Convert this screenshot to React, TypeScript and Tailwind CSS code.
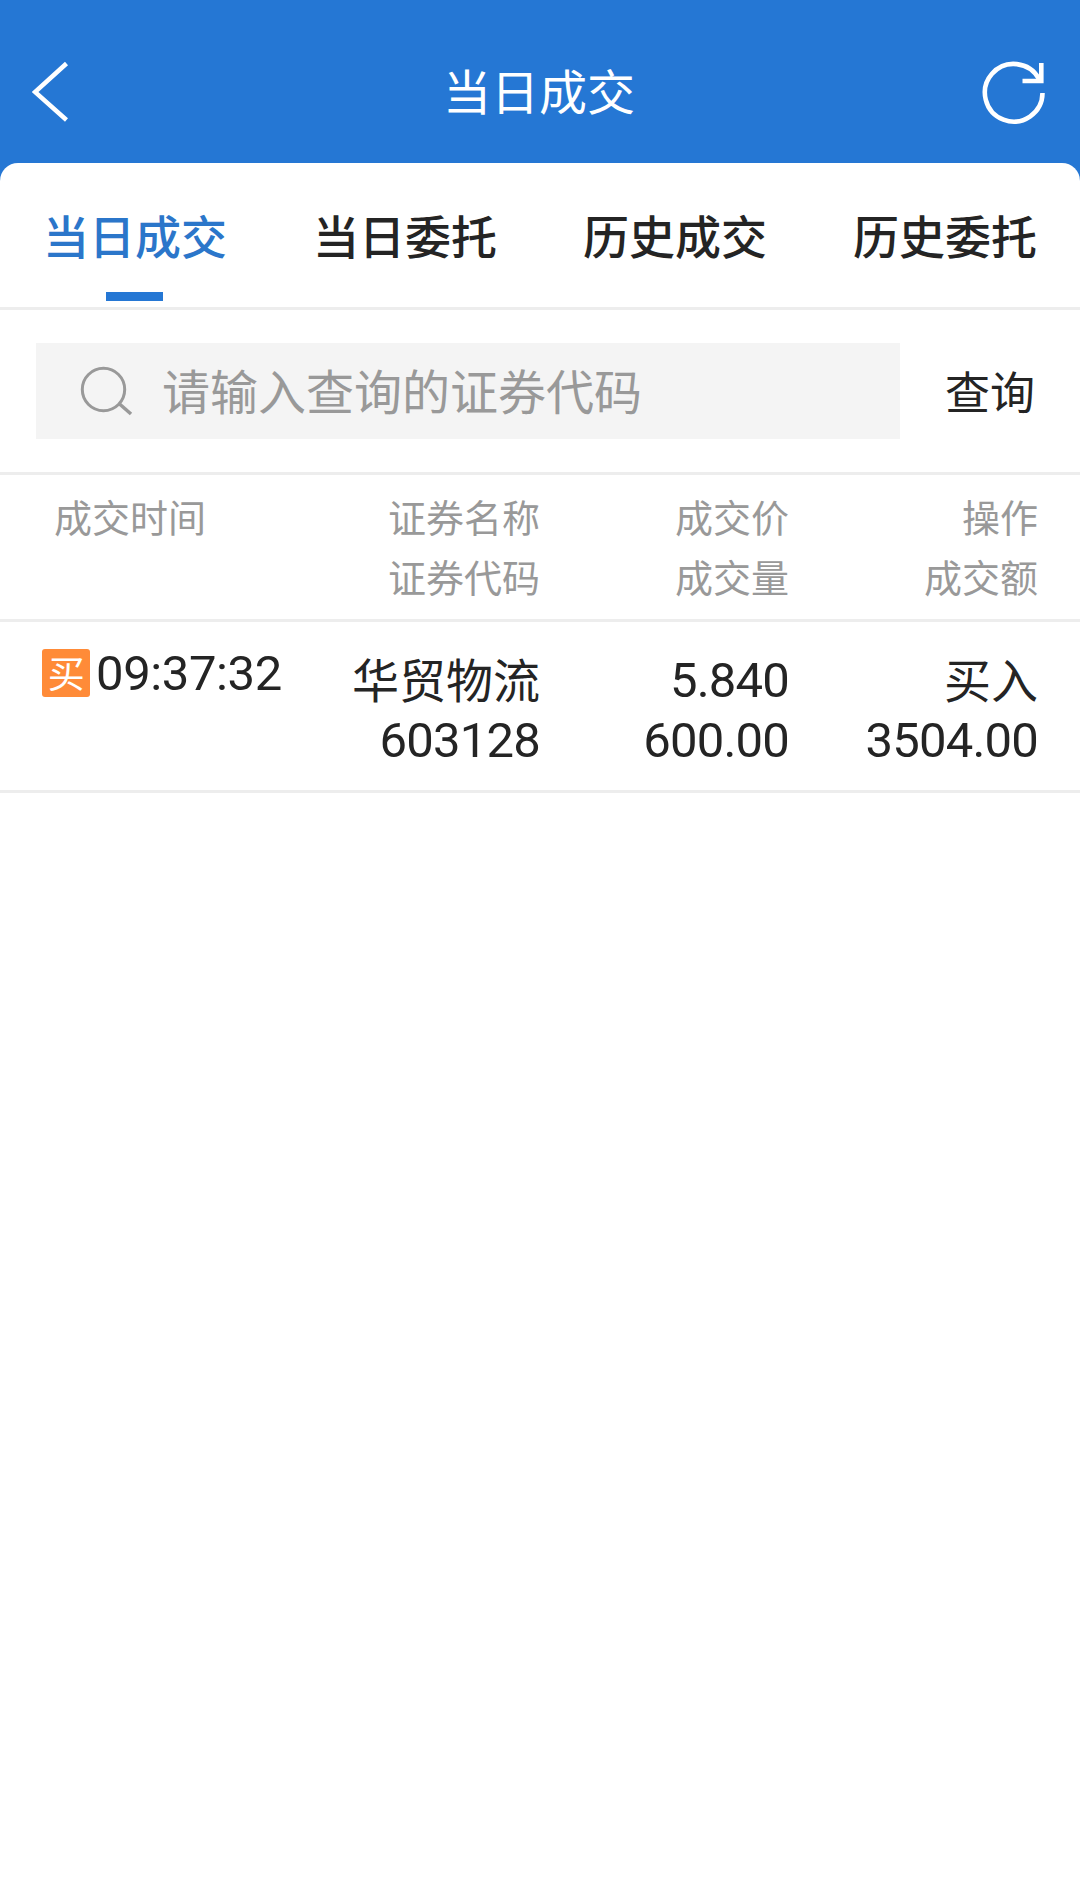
import { useState } from 'react'

type Deal = {
  time: string
  side: string
  name: string
  code: string
  price: string
  volume: string
  action: string
  amount: string
}

const tabs = ['当日成交', '当日委托', '历史成交', '历史委托']

const columns = [
  ['证券名称', '证券代码'],
  ['成交价', '成交量'],
  ['操作', '成交额'],
]

const deals: Deal[] = [
  {
    time: '09:37:32',
    side: '买',
    name: '华贸物流',
    code: '603128',
    price: '5.840',
    volume: '600.00',
    action: '买入',
    amount: '3504.00',
  },
]

const rowGrid = 'grid grid-cols-[300px_240px_249px_249px]'
const digits = "pt-[2px] font-['Roboto','Noto_Sans_CJK_SC',sans-serif] text-[49px]"

export default function App() {
  const [active, setActive] = useState(0)
  const [query, setQuery] = useState('')

  return (
    <div className="min-h-screen w-full bg-white font-['Noto_Sans_CJK_SC',sans-serif] text-[#242424]">
      <div className="bg-[#2577d4]">
        <header className="grid h-[163px] grid-cols-[1fr_auto_1fr] items-center pt-[23px] pr-[34px] pl-8 text-white">
          <button type="button" aria-label="返回" className="justify-self-start">
            <BackIcon />
          </button>
          <h1 className="pb-2 text-[48px] leading-[60px]">当日成交</h1>
          <button type="button" aria-label="刷新" className="justify-self-end">
            <RefreshIcon />
          </button>
        </header>

        <nav className="grid h-[147px] grid-cols-4 rounded-t-[18px] border-b-[3px] border-[#ededed] bg-white">
          {tabs.map((tab, index) => (
            <button
              key={tab}
              type="button"
              onClick={() => setActive(index)}
              className={`flex flex-col items-center pt-[41px] text-[46px] leading-[60px] font-medium ${
                index === active ? 'text-[#2b76ca]' : ''
              }`}
            >
              {tab}
              {index === active && (
                <span className="mt-7 mr-px h-[9px] w-[57px] bg-[#2577d4]" />
              )}
            </button>
          ))}
        </nav>
      </div>

      <form
        className="flex h-[165px] items-center border-b-[3px] border-[#ededed] pl-9"
        onSubmit={(event) => event.preventDefault()}
      >
        <label className="flex h-24 w-[864px] items-center bg-[#f4f4f4] pl-[44px]">
          <SearchIcon />
          <input
            value={query}
            onChange={(event) => setQuery(event.target.value)}
            placeholder="请输入查询的证券代码"
            className="ml-[28px] h-24 flex-1 pb-1 text-[48px] outline-none placeholder:text-[#999]"
          />
        </label>
        <button type="submit" className="flex-1 text-[45px] leading-[60px]">
          查询
        </button>
      </form>

      <div
        className={`${rowGrid} h-[147px] border-b-[3px] border-[#ededed] pt-[11px] text-right text-[38px] leading-[60px] text-[#999]`}
      >
        <div className="pl-[54px] text-left">成交时间</div>
        {columns.map(([top, bottom]) => (
          <div key={top}>
            <div>{top}</div>
            <div>{bottom}</div>
          </div>
        ))}
      </div>

      {deals.map((deal) => (
        <div
          key={deal.time}
          className={`${rowGrid} h-[171px] border-b-[3px] border-[#ededed] pt-[27px] text-right text-[47px] leading-[60px] tracking-[-0.8px]`}
        >
          <div className="flex h-12 items-center pl-[42px] tracking-[-0.4px]">
            <span className="flex size-12 items-center justify-center rounded-[3px] bg-[#ff8b38] pb-[2px] text-[37px] text-white">
              {deal.side}
            </span>
            <span className={`ml-[6px] ${digits}`}>{deal.time}</span>
          </div>
          <div>
            <div className="-mt-px mb-px tracking-normal">{deal.name}</div>
            <div className={digits}>{deal.code}</div>
          </div>
          <div className={digits}>
            <div>{deal.price}</div>
            <div>{deal.volume}</div>
          </div>
          <div>
            <div className="-mt-px mb-px tracking-normal">{deal.action}</div>
            <div className={digits}>{deal.amount}</div>
          </div>
        </div>
      ))}
    </div>
  )
}

function BackIcon() {
  return (
    <svg width="38" height="64" viewBox="0 0 38 64" fill="none">
      <path d="M34.500 2.500L3 31l31.500 28" stroke="currentColor" strokeWidth="4.500" />
    </svg>
  )
}

function RefreshIcon() {
  return (
    <svg width="64" height="64" viewBox="0 0 64 64" fill="none">
      <path
        d="M60.500 32A28.800 28.800 0 1 1 57 18"
        stroke="currentColor"
        strokeWidth="4.600"
      />
      <path d="M59.300 2v18H40.500" stroke="currentColor" strokeWidth="4.600" />
    </svg>
  )
}

function SearchIcon() {
  return (
    <svg width="54" height="52" viewBox="0 0 54 52" fill="none" className="text-[#999]">
      <circle cx="23.500" cy="24.500" r="21.200" stroke="currentColor" strokeWidth="3" />
      <path d="M39 38.500l12 10.500" stroke="currentColor" strokeWidth="3.500" />
    </svg>
  )
}
